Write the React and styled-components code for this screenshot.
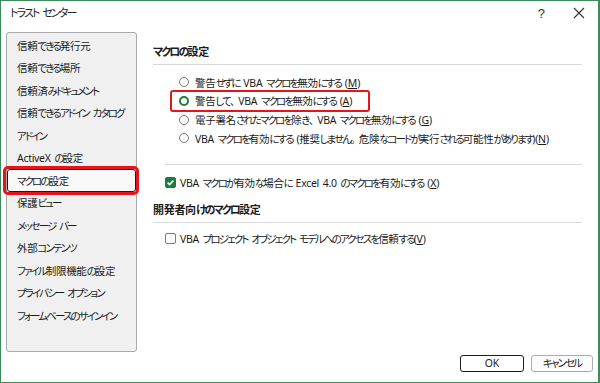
import React from "react";
import styled, { createGlobalStyle } from "styled-components";

const GlobalStyle = createGlobalStyle`
  html, body {
    margin: 0;
    padding: 0;
    background: #ffffff;
  }
  body {
    font-family: "Noto Sans", "Noto Sans CJK JP", sans-serif;
    font-feature-settings: "palt";
    color: #1b1b1b;
  }
`;

const SPLIT = /([\u3040-\u30ff]+|[\u3000-\u303f]+)/;
const KANA = /^[\u3040-\u30ff]+$/;
const PUNCT = /^[\u3000-\u303f]+$/;

function Jp({ text }) {
  return text
    .split(SPLIT)
    .filter(Boolean)
    .map((part, i) => {
      if (KANA.test(part)) return <Kana key={i}>{part}</Kana>;
      if (PUNCT.test(part)) return <Punct key={i}>{part}</Punct>;
      return <Kanji key={i}>{part}</Kanji>;
    });
}

const sideItems = [
  "信頼できる発行元",
  "信頼できる場所",
  "信頼済みドキュメント",
  "信頼できるアドイン カタログ",
  "アドイン",
  "ActiveX の設定",
  "マクロの設定",
  "保護ビュー",
  "メッセージ バー",
  "外部コンテンツ",
  "ファイル制限機能の設定",
  "プライバシー オプション",
  "フォームベースのサインイン",
];

const radios = [
  { text: "警告せずに VBA マクロを無効にする (", key: "M" },
  { text: "警告して、VBA マクロを無効にする (", key: "A", checked: true },
  { text: "電子署名されたマクロを除き、VBA マクロを無効にする (", key: "G" },
  { text: "VBA マクロを有効にする (推奨しません。危険なコードが実行される可能性があります)(", key: "N" },
];

function App() {
  return (
    <>
      <GlobalStyle />
      <Window>
        <TitleBar>
          <Title>
            <Jp text="トラスト センター" />
          </Title>
          <TitleButtons>
            <HelpMark>?</HelpMark>
            <CloseMark>
              <svg width="12" height="12" viewBox="0 0 12 12">
                <path d="M1 1 L11 11 M11 1 L1 11" stroke="#333" strokeWidth="1.1" fill="none" />
              </svg>
            </CloseMark>
          </TitleButtons>
        </TitleBar>

        <Body>
          <Sidebar>
            {sideItems.map((item) => (
              <SideItem key={item} $selected={item === "マクロの設定"}>
                <Jp text={item} />
              </SideItem>
            ))}
          </Sidebar>

          <Content>
            <SectionHeading>
              <Jp text="マクロの設定" />
            </SectionHeading>
            <Divider />
            <RadioGroup>
              {radios.map((r) => (
                <OptionRow key={r.key} $marked={r.checked}>
                  <Radio $checked={r.checked} />
                  <span>
                    <Jp text={r.text} />
                    <u>{r.key}</u>)
                  </span>
                </OptionRow>
              ))}
            </RadioGroup>
            <Divider $indent />
            <CheckRow>
              <Checkbox $checked>
                <svg width="9" height="9" viewBox="0 0 9 9">
                  <path d="M1.6 4.6 L3.6 6.5 L7.4 2.5" stroke="#fff" strokeWidth="1.6" fill="none" />
                </svg>
              </Checkbox>
              <span>
                <Jp text="VBA マクロが有効な場合に Excel 4.0 のマクロを有効にする (" />
                <u>X</u>)
              </span>
            </CheckRow>
            <SectionHeading $second>
              <Jp text="開発者向けのマクロ設定" />
            </SectionHeading>
            <Divider />
            <CheckRow $gap>
              <Checkbox />
              <span>
                <Jp text="VBA プロジェクト オブジェクト モデルへのアクセスを信頼する(" />
                <u>V</u>)
              </span>
            </CheckRow>
          </Content>
        </Body>

        <Footer>
          <DialogButton $default>OK</DialogButton>
          <DialogButton>
            <Jp text="キャンセル" />
          </DialogButton>
        </Footer>
      </Window>
    </>
  );
}

export default App;

const Kana = styled.span`
  letter-spacing: -1.9px;
`;

const Kanji = styled.span`
  letter-spacing: -0.3px;
  word-spacing: 1.3px;
`;

const Punct = styled.span`
  font-feature-settings: normal;
  letter-spacing: -2px;
`;

const Window = styled.div`
  width: 600px;
  height: 383px;
  box-sizing: border-box;
  border: 1px solid #3b8b5c;
  border-right-width: 2px;
  background: #ffffff;
  display: flex;
  flex-direction: column;
  padding: 0 5px 0 5px;
  font-size: 10.5px;
`;

const TitleBar = styled.div`
  height: 31px;
  display: flex;
  align-items: flex-start;
  justify-content: space-between;
  padding-top: 4px;
  box-sizing: border-box;
`;

const Title = styled.div`
  font-size: 11px;
  line-height: 16px;
  padding-left: 4px;
  color: #222;
`;

const TitleButtons = styled.div`
  display: flex;
  align-items: center;
  gap: 28px;
  padding-right: 8px;
  height: 16px;
`;

const HelpMark = styled.span`
  font-family: "Liberation Sans", sans-serif;
  font-size: 13px;
  color: #333;
`;

const CloseMark = styled.span`
  display: flex;
  align-items: center;
`;

const Body = styled.div`
  display: flex;
  height: 320px;
`;

const Sidebar = styled.div`
  width: 131px;
  height: 320px;
  flex-shrink: 0;
  box-sizing: border-box;
  border: 1px solid #a9a9a9;
  border-radius: 3px;
  background: #f0f0f0;
  padding: 1px 0;
`;

const SideItem = styled.div`
  position: relative;
  height: 22.5px;
  box-sizing: border-box;
  display: flex;
  align-items: center;
  padding-left: 9px;
  color: #1b1b1b;
  white-space: pre;
  border: 1px solid ${(p) => (p.$selected ? "#1a1a1a" : "transparent")};
  border-radius: 3px;
  background: ${(p) => (p.$selected ? "#f9f9f9" : "transparent")};

  &::after {
    content: "";
    display: ${(p) => (p.$selected ? "block" : "none")};
    position: absolute;
    top: -4px;
    bottom: -4px;
    left: -5px;
    right: -4px;
    border: 3px solid #e8141b;
    border-radius: 5px;
  }
`;

const Content = styled.div`
  flex: 1;
  min-width: 0;
  margin-left: 16px;
  margin-right: 11px;
  display: flex;
  flex-direction: column;
`;

const SectionHeading = styled.div`
  font-size: 11px;
  font-weight: 700;
  line-height: 16px;
  margin-top: ${(p) => (p.$second ? "10px" : "12px")};
  color: #1b1b1b;
`;

const Divider = styled.div`
  height: 1px;
  background: #d8d8d8;
  margin-top: 4px;
  margin-left: ${(p) => (p.$indent ? "12px" : "0")};
`;

const RadioGroup = styled.div`
  display: flex;
  flex-direction: column;
  margin-top: 8px;
  margin-bottom: 12px;
`;

const OptionRow = styled.div`
  position: relative;
  height: 18.67px;
  display: flex;
  align-items: center;
  padding-left: 26px;
  white-space: pre;

  &::after {
    content: "";
    display: ${(p) => (p.$marked ? "block" : "none")};
    position: absolute;
    left: 17px;
    top: -2px;
    width: 200px;
    height: 22px;
    box-sizing: border-box;
    border: 2.5px solid #e8141b;
    border-radius: 3px;
  }
`;

const Radio = styled.span`
  width: 10px;
  height: 10px;
  box-sizing: border-box;
  border-radius: 50%;
  border: ${(p) => (p.$checked ? "2.6px solid #1b7a3e" : "1px solid #7a7a7a")};
  background: #fff;
  margin-right: 6px;
  flex-shrink: 0;
`;

const CheckRow = styled.div`
  height: 18px;
  display: flex;
  align-items: center;
  padding-left: 12px;
  margin-top: ${(p) => (p.$gap ? "7px" : "9px")};
  white-space: pre;
`;

const Checkbox = styled.span`
  width: 11px;
  height: 11px;
  box-sizing: border-box;
  border-radius: 2px;
  border: 1px solid ${(p) => (p.$checked ? "#1e7a43" : "#7a7a7a")};
  background: ${(p) => (p.$checked ? "#1e7a43" : "#fff")};
  display: flex;
  align-items: center;
  justify-content: center;
  margin-right: 4px;
  flex-shrink: 0;
`;

const Footer = styled.div`
  display: flex;
  justify-content: flex-end;
  gap: 7px;
  padding-top: 3px;
`;

const DialogButton = styled.button`
  width: ${(p) => (p.$default ? "64px" : "62px")};
  height: 17px;
  box-sizing: border-box;
  padding: 0;
  font-family: "Noto Sans", "Noto Sans CJK JP", sans-serif;
  font-feature-settings: "palt";
  font-size: 10.5px;
  line-height: 1;
  color: #1b1b1b;
  background: ${(p) => (p.$default ? "#ffffff" : "#fbfbfb")};
  border: ${(p) => (p.$default ? "1.5px solid #1b1b1b" : "1px solid #adadad")};
  border-radius: 3px;
`;
